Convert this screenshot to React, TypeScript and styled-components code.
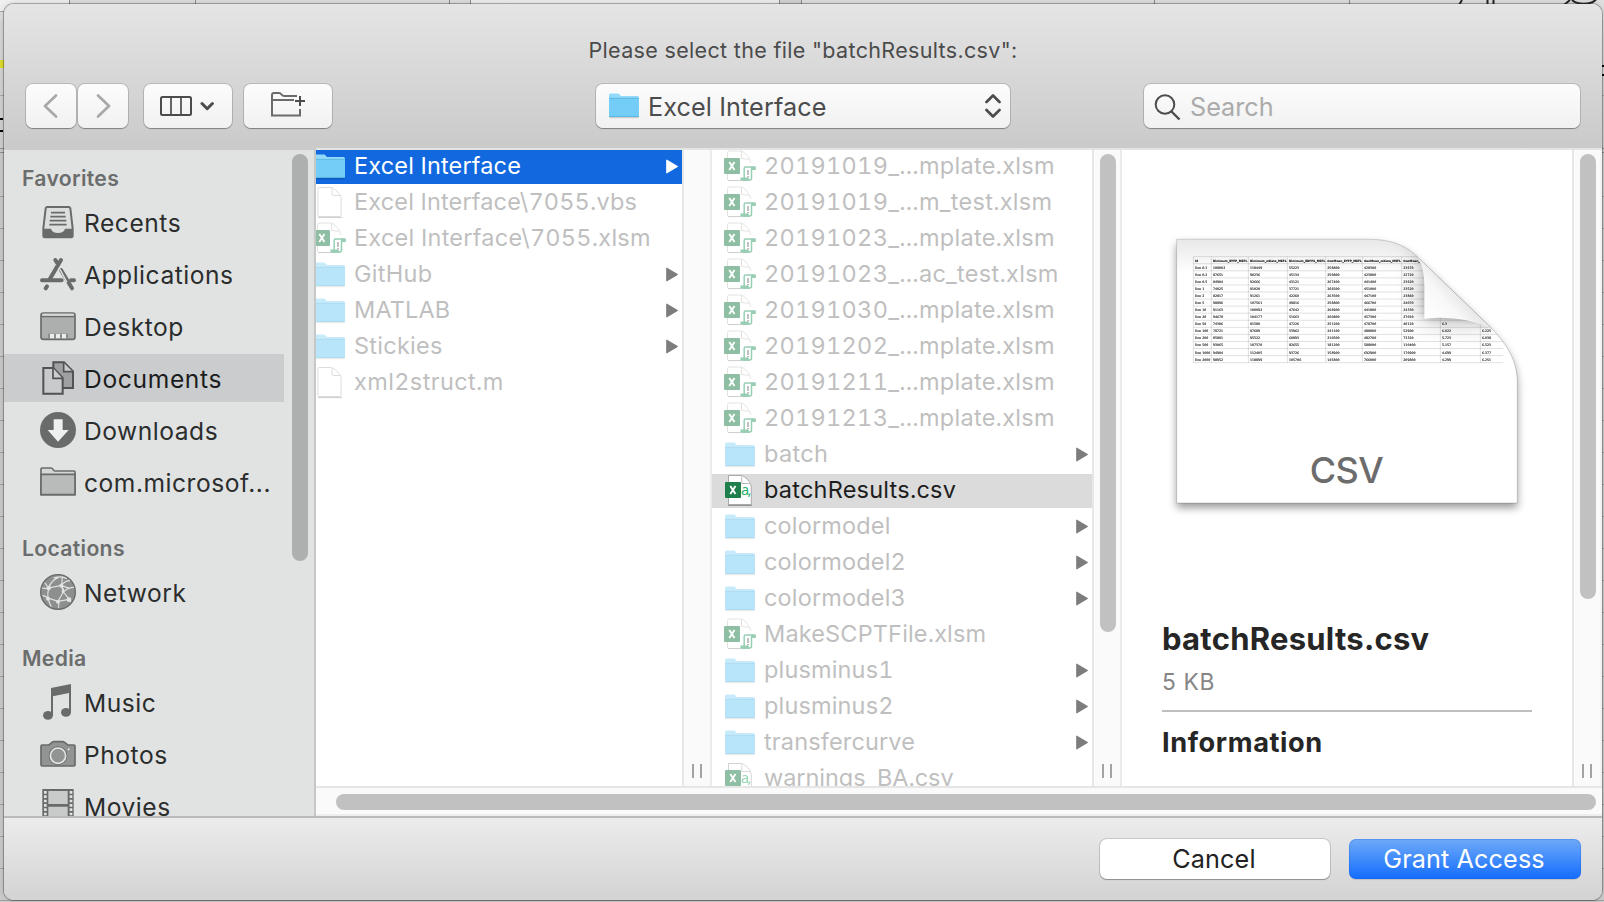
import React from "react";
import styled, { createGlobalStyle, css } from "styled-components";

const Global = createGlobalStyle`
  *, *::before, *::after { box-sizing: border-box; }
  html, body { margin: 0; padding: 0; overflow: hidden; }
  body { font-family: Inter, "Liberation Sans", sans-serif; }
`;

/* ---------- spreadsheet edge visible behind the sheet ---------- */

const Backdrop = styled.div`
  position: relative;
  width: 1604px;
  height: 902px;
  padding: 4px 2px 2px 4px;
  overflow: hidden;
  background:
    linear-gradient(#dede2c, #dede2c) 0 60px / 4px 8px no-repeat,
    linear-gradient(#000, #000) 0 118px / 3px 2px no-repeat,
    linear-gradient(#000, #000) 0 130px / 3px 2px no-repeat,
    linear-gradient(#000, #000) 1602px 65px / 2px 2px no-repeat,
    linear-gradient(#000, #000) 1602px 74px / 2px 2px no-repeat,
    linear-gradient(#a9a9a9, #a9a9a9) 0 11px / 4px 1px no-repeat,
    linear-gradient(#a9a9a9, #a9a9a9) 0 95px / 100% 1px no-repeat,
    linear-gradient(#8e8e8e, #8e8e8e) 0 148px / 100% 1px no-repeat,
    linear-gradient(#8e8e8e, #8e8e8e) 0 152px / 100% 1px no-repeat,
    linear-gradient(#8e8e8e, #8e8e8e) 69px 0 / 1px 4px no-repeat,
    linear-gradient(#8e8e8e, #8e8e8e) 195px 0 / 1px 4px no-repeat,
    linear-gradient(#8e8e8e, #8e8e8e) 449px 0 / 1px 4px no-repeat,
    linear-gradient(#8e8e8e, #8e8e8e) 470px 0 / 1px 4px no-repeat,
    linear-gradient(#8e8e8e, #8e8e8e) 779px 0 / 1px 4px no-repeat,
    linear-gradient(#8e8e8e, #8e8e8e) 801px 0 / 1px 4px no-repeat,
    linear-gradient(#8e8e8e, #8e8e8e) 1154px 0 / 1px 4px no-repeat,
    linear-gradient(#8e8e8e, #8e8e8e) 1349px 0 / 1px 4px no-repeat,
    linear-gradient(#f0f0f0, #f0f0f0) 0 0 / 69px 12px no-repeat,
    linear-gradient(#efefef, #efefef) 471px 0 / 308px 4px no-repeat,
    linear-gradient(#d3d3d3, #d3d3d3) 780px 0 / 21px 4px no-repeat,
    linear-gradient(#dfdfdf, #dfdfdf) 0 0 / 100% 20px no-repeat,
    linear-gradient(#dadada, #cfcfcf) 0 0 / 100% 148px no-repeat,
    repeating-linear-gradient(#a2a2a2 0 1px, #cbcbcb 1px 32px) 0 196px / 100% 720px no-repeat,
    #cbcbcb;
`;

const EdgeMarks = styled.svg`
  position: absolute;
  left: 1450px;
  top: 0;
`;

const Sheet = styled.main`
  display: flex;
  flex-direction: column;
  width: 1598px;
  height: 896px;
  border-radius: 10px;
  overflow: hidden;
  background: #e1e3e3;
`;

const SheetShadow = styled.div`
  border-radius: 10px;
  box-shadow: 0 0 0 1px rgba(0, 0, 0, 0.26), 0 0 6px rgba(0, 0, 0, 0.2);
`;

/* ---------- header ---------- */

const Header = styled.header`
  flex: none;
  height: 144px;
  background: linear-gradient(#e5e5e5, #cacaca);
  display: flex;
  flex-direction: column;
`;

const Prompt = styled.h1`
  margin: 0;
  height: 80px;
  padding-top: 12px;
  line-height: 68px;
  text-align: center;
  font-size: 21.5px;
  font-weight: 400;
  letter-spacing: 0.33px;
  color: #4b4b4b;
`;

const Toolbar = styled.div`
  display: flex;
  height: 44px;
  padding: 0 22px;
`;

const control = css`
  height: 44px;
  border-radius: 7px;
  background: linear-gradient(#fcfcfc, #f1f1f1);
  box-shadow: 0 0 0 1px rgba(0, 0, 0, 0.13), 0 1px 1px rgba(0, 0, 0, 0.28);
  display: flex;
  align-items: center;
`;

const ToolButton = styled.button<{ $w: number; $gap: number }>`
  ${control}
  justify-content: center;
  flex: none;
  width: ${(p) => p.$w}px;
  margin-right: ${(p) => p.$gap}px;
  border: 0;
  padding: 0 2px 0 0;
`;

const Popup = styled.div`
  ${control}
  flex: none;
  width: 414px;
  padding: 0 9px 0 12px;
  font-size: 25.2px;
  color: #4c4c4c;
  letter-spacing: 0.1px;
`;

const PopupLabel = styled.span`
  flex: 1;
  padding: 1px 0 0 8px;
`;

const SearchBox = styled.div`
  ${control}
  flex: none;
  width: 436px;
  margin-left: auto;
  padding-left: 10px;
  gap: 8px;
  font-size: 25.2px;
  color: #ababab;
`;

const SearchLabel = styled.span`
  padding-top: 1px;
`;

/* ---------- body ---------- */

const Body = styled.div`
  flex: none;
  display: flex;
  height: 668px;
`;

const Sidebar = styled.nav`
  flex: none;
  width: 312px;
  display: flex;
  border-top: 2px solid #cbcbcb;
  border-right: 2px solid #c6c7c7;
  background: #e1e3e3;
  overflow: hidden;
`;

const SidebarList = styled.div`
  width: 280px;
  height: 666px;
  overflow: hidden;
`;

const SideHeading = styled.h2<{ $first?: boolean }>`
  margin: 0;
  padding: ${(p) => (p.$first ? 10 : 22)}px 0 0 18px;
  line-height: 36px;
  font-size: 21.2px;
  font-weight: 600;
  letter-spacing: 0.3px;
  color: #6b6d6d;
`;

const SideItem = styled.div`
  height: 52px;
  padding: 2px 0;
`;

const SideItemInner = styled.div<{ $selected?: boolean }>`
  height: 48px;
  padding-left: 36px;
  display: flex;
  align-items: center;
  gap: 8px;
  font-size: 24.6px;
  letter-spacing: ${(p) => (p.$selected ? 0.65 : 0.52)}px;
  white-space: nowrap;
  color: ${(p) => (p.$selected ? "#1b1c1d" : "#2b2d2d")};
  background: ${(p) => (p.$selected ? "#cbcccd" : "transparent")};

  svg { flex: none; }
  span { padding-top: 2px; }
`;

const Thumb = styled.div<{ $h: number; $dark?: boolean }>`
  width: 16px;
  height: ${(p) => p.$h}px;
  margin: 4px 0 0 6px;
  border-radius: 8px;
  background: ${(p) => (p.$dark ? "#aeafaf" : "#c1c1c1")};
`;

const SideThumb = styled(Thumb)`
  margin-left: 8px;
`;

const Browser = styled.section`
  width: 1286px;
  display: flex;
  flex-direction: column;
  border-top: 2px solid #e4e4e4;
  background: #fff;
`;

const Columns = styled.div`
  display: flex;
  height: 636px;
`;

const Column = styled.div<{ $w: number }>`
  flex: none;
  width: ${(p) => p.$w}px;
  overflow: hidden;
  background: #fff;
`;

const Gutter = styled.div<{ $last?: boolean }>`
  flex: none;
  width: 30px;
  border-left: 2px solid #e7e7e7;
  border-right: 2px solid ${(p) => (p.$last ? "#f3f3f3" : "#ebebeb")};
  background: #fafafa;
  display: flex;
  flex-direction: column;
`;

const Grip = styled.div`
  margin: auto 0 8px 8px;
  width: 10px;
  height: 14px;
  border-left: 2px solid #a3a3a3;
  border-right: 2px solid #a3a3a3;
`;

const Row = styled.div<{ $state?: "active" | "chosen"; $shift: number }>`
  height: 34px;
  margin-bottom: 2px;
  display: flex;
  align-items: center;
  padding-right: 4px;
  white-space: nowrap;
  font-size: 23.5px;
  font-variant-numeric: tabular-nums;
  color: ${(p) => (p.$state === "active" ? "#fff" : p.$state === "chosen" ? "#1d1d1d" : "#bfbfbf")};
  background: ${(p) => (p.$state === "active" ? "#1168df" : p.$state === "chosen" ? "#dbdbdb" : "#fff")};

  > svg:first-child { flex: none; margin-left: ${(p) => p.$shift}px; }
  > svg:last-child { flex: none; }
`;

const RowLabel = styled.span<{ $ls: number }>`
  flex: 1;
  padding: 0 0 3px 8px;
  letter-spacing: ${(p) => p.$ls}px;
`;

const HScroll = styled.div`
  height: 30px;
  border-top: 2px solid #e6e6e6;
  border-bottom: 2px solid #eeeeee;
  background: #fafafa;
  padding: 6px 6px 0 20px;
`;

const HThumb = styled.div`
  height: 16px;
  border-radius: 8px;
  background: #c1c1c1;
`;

/* ---------- preview ---------- */

const Preview = styled.article`
  flex: none;
  width: 450px;
  padding: 70px 32px 0 38px;
  overflow: hidden;
  background: #fff;
  color: #262626;
`;

const PreviewArt = styled.div`
  height: 380px;
  svg { display: block; }
`;

const FileName = styled.h2`
  margin: 15px 0 0 2px;
  line-height: 48px;
  height: 48px;
  font-size: 31px;
  font-weight: 700;
  letter-spacing: 0.25px;
  white-space: nowrap;
`;

const FileSize = styled.p`
  margin: 4px 0 0 2px;
  line-height: 30px;
  font-size: 22.8px;
  letter-spacing: 0.6px;
  color: #868686;
`;

const Rule = styled.hr`
  margin: 13px 8px 0 2px;
  border: 0;
  height: 2px;
  background: #bfbfbf;
`;

const InfoTitle = styled.h3`
  margin: 14px 0 0 2px;
  line-height: 34px;
  font-size: 27.2px;
  font-weight: 700;
  letter-spacing: 0.6px;
`;

/* ---------- footer ---------- */

const Footer = styled.footer`
  height: 84px;
  border-top: 2px solid #bababa;
  background: linear-gradient(#ececec, #d3d3d3);
  display: flex;
  justify-content: flex-end;
  gap: 19px;
  padding: 21px 21px 0 0;
`;

const Button = styled.button<{ $primary?: boolean }>`
  height: 40px;
  width: ${(p) => (p.$primary ? 232 : 230)}px;
  border: 0;
  border-radius: 7px;
  padding: 0 2px 0 0;
  font-family: inherit;
  font-size: 25.2px;
  letter-spacing: 0.12px;
  color: ${(p) => (p.$primary ? "#fff" : "#222")};
  background: ${(p) => (p.$primary ? "linear-gradient(#6fa9f9, #4a92fa 40%, #146cff)" : "#fff")};
  box-shadow: ${(p) =>
    p.$primary
      ? "inset 0 0 0 1px rgba(20, 90, 220, 0.25), 0 1px 1px rgba(0, 0, 0, 0.12)"
      : "0 0 0 1px rgba(0, 0, 0, 0.13), 0 1px 1px rgba(0, 0, 0, 0.25)"};
`;

/* ---------- file icons ---------- */

const Folder = ({ dim }: { dim?: boolean }) => (
  <svg width="32" height="34" viewBox="0 0 32 34" opacity={dim ? 0.5 : 1}>
    <path d="M1.5 28.6h29" stroke="#000" strokeOpacity=".16" strokeWidth="1.4" />
    <path d="M1 6a1.6 1.6 0 0 1 1.6-1.6h7.4c1.6 0 1.8 2.7 4 2.7h15.4A1.6 1.6 0 0 1 31 8.7V26H1z" fill="#93d9fa" />
    <path d="M1 9.3h30v17.5a1.3 1.3 0 0 1-1.3 1.3H2.3A1.3 1.3 0 0 1 1 26.8z" fill="#74cdf6" />
    <path d="M1 9.3h30M1 27.4h30" stroke="#4fb0dd" strokeWidth="1" opacity=".7" />
  </svg>
);

const PlainDoc = () => (
  <svg width="32" height="34" viewBox="0 0 32 34">
    <path d="M4 31.5h24" stroke="#000" strokeOpacity=".18" strokeWidth="1.2" />
    <path d="M5 1.5h12.5c2 0 9.5 7 9.5 10V29.5a1 1 0 0 1-1 1H5a1 1 0 0 1-1-1V2.5a1 1 0 0 1 1-1z" fill="#fff" stroke="#dcdcdc" />
    <path d="M18 2v6a1.5 1.5 0 0 0 1.5 1.5H26" fill="none" stroke="#dcdcdc" />
  </svg>
);

const ExcelMark = ({ x }: { x: number }) => (
  <>
    <rect x={x} y="8" width="16" height="16" rx="1" fill="#1f7f4c" />
    <path d={`M${x + 5.3} 12l5.2 8m0-8l-5.2 8`} stroke="#fff" strokeWidth="1.9" />
  </>
);

const XlsmDoc = () => (
  <svg width="32" height="34" viewBox="0 0 32 34">
    <g opacity=".5">
      <path d="M4 30.6h17" stroke="#000" strokeOpacity=".4" />
      <path d="M3.5 30V2.5a1.5 1.5 0 0 1 1.5-1.5h12.5c4.500 2 8.500 7 9.300 12" fill="none" stroke="#c8c8c8" />
      <path d="M17.5 1v7.5l7.5.8" fill="none" stroke="#c8c8c8" />
      <ExcelMark x={0} />
      <path d="M20.2 29V18.2q0-1.300 1.300-1.300h7q-1 .5-1 2V28q0 2-1.800 2h-5.500z" fill="#fff" stroke="#2fa06c" strokeWidth="1.5" />
      <path d="M28 16.200h3q.8 0 .8 1V20h-3.800z" fill="#2f9d69" />
      <path d="M16.200 27.500h8.300q0 2.600 2 3.300h-8.500q-1.800-.4-1.800-3.300z" fill="#2f9d69" />
      <path d="M24 20v5M24 26v1.600" stroke="#777" strokeWidth="1.8" />
    </g>
  </svg>
);

const CommaText = styled.text`
  font: 400 14.5px "Noto Sans", sans-serif;
  fill: #27b16b;
`;

const CsvDoc = ({ dim }: { dim?: boolean }) => (
  <svg width="32" height="34" viewBox="0 0 32 34" opacity={dim ? 0.5 : 1}>
    <path d="M4 31.3h24" stroke="#000" strokeOpacity=".4" strokeWidth="1" />
    <path d="M4.5 1.5h13c4 1 8.5 6 9.8 11v18H4.5z" fill="#fff" stroke="#a9a9a9" strokeWidth="1" />
    <path d="M17.8 1.5v8h8.500" fill="#fff" stroke="#b9b9b9" strokeWidth="1" />
    <ExcelMark x={1} />
    <CommaText x="17" y="21" textLength="10.5">a,</CommaText>
  </svg>
);

const Arrow = ({ active }: { active?: boolean }) => (
  <svg width="12" height="34" viewBox="0 0 12 34">
    <path d="M.8 10.2v12.600L11.300 16.500z" fill={active ? "#fff" : "#7d7d7d"} stroke={active ? "#fff" : "#7d7d7d"} strokeWidth="1.2" strokeLinejoin="round" />
  </svg>
);

/* ---------- sidebar icons ---------- */

const G = "#696b6a";

const SideIcon = ({ children }: { children: React.ReactNode }) => (
  <svg width="36" height="36" viewBox="0 0 108 108" fill="none">
    {children}
  </svg>
);

const icons: Record<string, React.ReactNode> = {
  recents: (
    <SideIcon>
      <path d="M22 9h64q4 0 5 4l7 60v23q0 4-4 4H14q-4 0-4-4V73l7-60q1-4 5-4z" fill="#dcdede" stroke={G} strokeWidth="6" />
      <path d="M10 74h23q4 13 21 13t21-13h23v23q0 3-3 3H13q-3 0-3-3z" fill={G} />
      <path d="M33 26h42M31 38h46M29 50h50M28 62h52" stroke={G} strokeWidth="5" />
    </SideIcon>
  ),
  apps: (
    <SideIcon>
      <g stroke={G} strokeWidth="12" strokeLinecap="round">
        <path d="M63 12L29 70M46 12l5 8M6 73h59M93 73h9M21 91l-4 6" />
        <path d="M63 42l33 55" />
      </g>
      <path d="M57 35l24 44" stroke="#e1e3e3" strokeWidth="4" />
    </SideIcon>
  ),
  desktop: (
    <SideIcon>
      <rect x="3" y="15" width="102" height="79" rx="7" fill="#adafae" stroke={G} strokeWidth="5" />
      <path d="M7 20h94" stroke="#d9dbda" strokeWidth="6" />
      <path d="M5 26h98" stroke={G} strokeWidth="4" />
      <path d="M24 77h60v14H24z" fill="#8b8d8c" />
      <path d="M30 78h12v13H30zM48 78h12v13H48zM66 78h12v13H66z" fill="#ebeceb" />
    </SideIcon>
  ),
  documents: (
    <SideIcon>
      <path d="M40 7h32l27 27v50H40z" fill="#9fa0a2" stroke="#505253" strokeWidth="6" />
      <path d="M71 8v27h27" fill="#cbcccd" stroke="#505253" strokeWidth="5" />
      <path d="M10 24h30l28 30v47H10z" fill="#c9cacb" stroke="#505253" strokeWidth="6" />
      <path d="M39 24v31h28" fill="#cbcccd" stroke="#505253" strokeWidth="5" />
    </SideIcon>
  ),
  downloads: (
    <SideIcon>
      <circle cx="54" cy="54" r="54" fill={G} />
      <path d="M41 22h27v32h18L54 89 23 54h18z" fill="#eef0ef" />
    </SideIcon>
  ),
  folder: (
    <SideIcon>
      <path d="M3 92V15q0-3 3-3h27q5 0 8 7 1 2 4 2h57q3 0 3 3v68z" fill="#d5d7d6" stroke={G} strokeWidth="5" strokeLinejoin="round" />
      <path d="M3 31h102v61H3z" fill="#b9bbba" stroke={G} strokeWidth="5" strokeLinejoin="round" />
    </SideIcon>
  ),
  network: (
    <SideIcon>
      <circle cx="54" cy="54" r="52" fill="#8d8f8e" stroke={G} strokeWidth="4" />
      <g stroke="#e1e3e3" strokeWidth="3.5">
        <path d="M6 42Q20 45 26 42L64 34 90 44M26 42Q34 16 62 8M64 34Q68 20 66 8M64 34Q76 20 90 20M26 42Q22 60 24 72L54 82 88 76M64 34L70 54 54 82M64 34Q72 44 70 54M70 54L88 76M24 72Q16 66 8 64M24 72Q28 88 34 98M54 82Q58 92 56 102M88 76L92 84M26 42L14 26M70 54Q84 40 102 40M40 12Q66 4 80 14" />
      </g>
      <g fill="#e1e3e3">
        <circle cx="26" cy="42" r="7" /><circle cx="64" cy="35" r="6" /><circle cx="24" cy="74" r="6" />
        <circle cx="54" cy="83" r="6" /><circle cx="87" cy="77" r="7" /><circle cx="69" cy="53" r="4" />
      </g>
    </SideIcon>
  ),
  music: (
    <SideIcon>
      <path d="M33 12L93 0v86h-6V27L39 37v58h-6z" fill={G} />
      <ellipse cx="24" cy="94" rx="15" ry="13" fill={G} />
      <ellipse cx="78" cy="85" rx="15" ry="13" fill={G} />
    </SideIcon>
  ),
  photos: (
    <SideIcon>
      <path d="M6 27h21l8-7q4-3 8-3h24q4 0 8 3l8 7h19q3 0 3 3v57q0 3-3 3H6q-3 0-3-3V30q0-3 3-3z" fill="#929493" stroke={G} strokeWidth="5" />
      <circle cx="54" cy="59" r="28" fill={G} />
      <circle cx="54" cy="59" r="23" fill="#929493" stroke="#e4e6e5" strokeWidth="5" />
      <circle cx="86" cy="40" r="3" fill="#e4e6e5" />
    </SideIcon>
  ),
  movies: (
    <SideIcon>
      <path d="M7 3h94v102H7z" fill={G} />
      <path d="M25 9h58v39H25zM25 56h58v44H25z" fill="#c9cbca" />
      <path d="M16 9v96M93 9v96" stroke="#e1e3e3" strokeWidth="8" strokeDasharray="8 5" />
    </SideIcon>
  ),
};

const sections: { title: string; items: [icon: string, label: string][] }[] = [
  {
    title: "Favorites",
    items: [
      ["recents", "Recents"],
      ["apps", "Applications"],
      ["desktop", "Desktop"],
      ["documents", "Documents"],
      ["downloads", "Downloads"],
      ["folder", "com.microsof..."],
    ],
  },
  { title: "Locations", items: [["network", "Network"]] },
  { title: "Media", items: [["music", "Music"], ["photos", "Photos"], ["movies", "Movies"]] },
];

/* ---------- browser data ---------- */

type Kind = "folder" | "doc" | "xlsm" | "csv";
type Entry = { kind: Kind; name: string; state?: "active" | "chosen"; ls?: number };

const parentFiles: Entry[] = [
  { kind: "folder", name: "Excel Interface", state: "active" },
  { kind: "doc", name: "Excel Interface\\7055.vbs" },
  { kind: "xlsm", name: "Excel Interface\\7055.xlsm", ls: 0.24 },
  { kind: "folder", name: "GitHub", ls: 0.3 },
  { kind: "folder", name: "MATLAB" },
  { kind: "folder", name: "Stickies", ls: 0.25 },
  { kind: "doc", name: "xml2struct.m", ls: 0.38 },
];

const childFiles: Entry[] = [
  { kind: "xlsm", name: "20191019_...mplate.xlsm", ls: 0.28 },
  { kind: "xlsm", name: "20191019_...m_test.xlsm", ls: 0.28 },
  { kind: "xlsm", name: "20191023_...mplate.xlsm", ls: 0.28 },
  { kind: "xlsm", name: "20191023_...ac_test.xlsm", ls: 0.28 },
  { kind: "xlsm", name: "20191030_...mplate.xlsm", ls: 0.28 },
  { kind: "xlsm", name: "20191202_...mplate.xlsm", ls: 0.28 },
  { kind: "xlsm", name: "20191211_...mplate.xlsm", ls: 0.28 },
  { kind: "xlsm", name: "20191213_...mplate.xlsm", ls: 0.28 },
  { kind: "folder", name: "batch", ls: 0.3 },
  { kind: "csv", name: "batchResults.csv", state: "chosen", ls: 0.22 },
  { kind: "folder", name: "colormodel" },
  { kind: "folder", name: "colormodel2" },
  { kind: "folder", name: "colormodel3" },
  { kind: "xlsm", name: "MakeSCPTFile.xlsm" },
  { kind: "folder", name: "plusminus1" },
  { kind: "folder", name: "plusminus2" },
  { kind: "folder", name: "transfercurve" },
  { kind: "csv", name: "warnings_BA.csv", ls: -0.05 },
];

const FileList = ({ files, shift }: { files: Entry[]; shift: number }) => (
  <>
    {files.map((f) => (
      <Row key={f.name} $state={f.state} $shift={shift}>
        {f.kind === "folder" && <Folder dim={!f.state} />}
        {f.kind === "doc" && <PlainDoc />}
        {f.kind === "xlsm" && <XlsmDoc />}
        {f.kind === "csv" && <CsvDoc dim={!f.state} />}
        <RowLabel $ls={f.ls ?? 0.15}>{f.name}</RowLabel>
        {f.kind === "folder" && <Arrow active={f.state === "active"} />}
      </Row>
    ))}
  </>
);

/* ---------- document thumbnail ---------- */

const colX = [100, 154, 265, 382, 497, 607, 725, 841, 961];
const table: string[][] = [
  ["Id", "BinCount_EYFP_MEFL", "BinCount_mKate_MEFL", "BinCount_EBFP2_MEFL", "GeoMean_EYFP_MEFL", "GeoMean_mKate_MEFL", "GeoMean_"],
  ["Dox 0.1", "108002", "118449", "55223", "258800", "428300", "23670"],
  ["Dox 0.2", "87651", "90236", "45134", "250800", "423800", "22720"],
  ["Dox 0.5", "84904", "92666", "43121", "267400", "441400", "23620"],
  ["Dox 1", "74025", "81020", "37721", "266500", "451000", "23520"],
  ["Dox 2", "82817", "91261", "42260", "263500", "447100", "23860"],
  ["Dox 5", "98896", "107561", "49816", "258800", "466700", "24070"],
  ["Dox 10", "91163", "100092", "47642", "266900", "441800", "24330"],
  ["Dox 20", "94678", "104177", "51663", "260800", "457300", "27010"],
  ["Dox 50", "74306", "81580", "47226", "251200", "478700", "40120", "6.3"],
  ["Dox 100", "78721", "87689", "53962", "241100", "488800", "52900", "6.022", "6.225"],
  ["Dox 200", "85801", "95522", "60893", "210500", "482700", "73320", "5.723", "6.038"],
  ["Dox 500", "93065", "107370", "82655", "181200", "588000", "110400", "5.157", "6.523"],
  ["Dox 1000", "94904", "112405", "93726", "158900", "692900", "170900", "4.699", "6.377"],
  ["Dox 2000", "98952", "118899", "105706", "145800", "766000", "209800", "4.299", "6.251"],
];

const Cell = styled.text<{ $head: boolean }>`
  font-family: "DejaVu Sans", sans-serif;
  font-size: ${(p) => (p.$head ? 8.6 : 9.6)}px;
  font-weight: ${(p) => (p.$head ? 700 : 400)};
  fill: #000;
  stroke: #000;
  stroke-width: 0.35;
`;

const TypeLabel = styled.text`
  font-family: Inter, sans-serif;
  font-size: 108px;
  font-weight: 500;
  fill: #6c6c6c;
`;

const rowH = 21.2;
const pagePath = "M50 58H630C700 58 745 82 775 113L985 315C1050 380 1072 430 1072 490V849H50z";
const curlPath = "M690 66C760 90 792 130 793 200V296C860 288 940 298 998 328C930 265 840 180 775 113C755 95 730 75 690 66z";

const Thumbnail = () => (
  <svg width="380" height="300" viewBox="0 0 1140 900">
    <defs>
      <clipPath id="page"><path d={pagePath} /></clipPath>
      <filter id="soft" x="-20%" y="-20%" width="140%" height="140%"><feGaussianBlur stdDeviation="12" /></filter>
      <filter id="softer" x="-40%" y="-40%" width="180%" height="180%"><feGaussianBlur stdDeviation="38" /></filter>
      <linearGradient id="topShade" x1="0" y1="0" x2="0" y2="1">
        <stop offset="0" stopColor="#e8e8e8" /><stop offset="1" stopColor="#fff" />
      </linearGradient>
      <linearGradient id="curlFill" gradientUnits="userSpaceOnUse" x1="800" y1="290" x2="890" y2="210">
        <stop offset="0" stopColor="#fff" /><stop offset=".6" stopColor="#f8f8f8" /><stop offset="1" stopColor="#e6e6e6" />
      </linearGradient>
    </defs>
    <path d={pagePath} fill="#000" opacity=".4" filter="url(#soft)" transform="translate(0 14)" />
    <path d={pagePath} fill="#fff" />
    <g clipPath="url(#page)">
      <rect x="50" y="58" width="1022" height="100" fill="url(#topShade)" />
      <path d={curlPath} fill="#000" opacity=".36" filter="url(#softer)" />
      <g stroke="#000" strokeOpacity=".12" strokeWidth="3">
        {table.map((_, i) => <path key={i} d={`M100 ${110 + i * rowH}H1030`} />)}
        <path d="M100 428H1030" />
        {colX.map((x) => <path key={x} d={`M${x} 110V428`} />)}
      </g>
      <g opacity=".92">
        {table.map((row, r) =>
          row.map((cell, c) => (
            <Cell key={`${r}-${c}`} $head={r === 0} x={colX[c] + 5} y={125 + r * rowH}>
              {cell}
            </Cell>
          ))
        )}
      </g>
      <path d={curlPath} fill="#000" opacity=".3" filter="url(#soft)" transform="translate(4 -4)" />
    </g>
    <path d="M775 113C790 145 793 170 793 200V296C860 288 940 298 998 328z" fill="url(#curlFill)" />
    <path d={pagePath} fill="none" stroke="#000" strokeOpacity=".17" strokeWidth="3" />
    <TypeLabel x="449" y="788" textLength="222">CSV</TypeLabel>
  </svg>
);

/* ---------- page ---------- */

export default function App() {
  return (
    <>
      <Global />
      <Backdrop>
        <EdgeMarks width="154" height="4" viewBox="0 0 154 4">
          <path d="M12 0L9 5M37.5 0v5M43.5 0v5" stroke="#222" strokeWidth="2" />
          <path d="M114 5l6-5M122 0c5 5 19 5 24-.5" stroke="#222" strokeWidth="2" fill="none" />
        </EdgeMarks>
        <SheetShadow>
          <Sheet>
            <Header>
              <Prompt>Please select the file "batchResults.csv":</Prompt>
              <Toolbar>
                <ToolButton $w={50} $gap={2} aria-label="Back">
                  <svg width="20" height="28" viewBox="0 0 20 28"><path d="M16 3.5L5 14l11 10.5" fill="none" stroke="#a8a8a8" strokeWidth="2.7" strokeLinecap="round" strokeLinejoin="round" /></svg>
                </ToolButton>
                <ToolButton $w={50} $gap={16} aria-label="Forward">
                  <svg width="20" height="28" viewBox="0 0 20 28"><path d="M6 3.5L17 14 6 24.5" fill="none" stroke="#a8a8a8" strokeWidth="2.7" strokeLinecap="round" strokeLinejoin="round" /></svg>
                </ToolButton>
                <ToolButton $w={88} $gap={12} aria-label="View">
                  <svg width="54" height="20" viewBox="0 0 54 20" fill="none">
                    <rect x="1" y="1" width="30" height="18" rx="1.5" stroke="#4c4c4c" strokeWidth="2" />
                    <path d="M11 1v18M21 1v18" stroke="#4c4c4c" strokeWidth="1.7" />
                    <path d="M42 7.5l5.2 5.2 5.2-5.2" stroke="#4c4c4c" strokeWidth="3" strokeLinecap="round" strokeLinejoin="round" />
                  </svg>
                </ToolButton>
                <ToolButton $w={88} $gap={264} aria-label="New Folder">
                  <svg width="38" height="28" viewBox="0 0 38 28" fill="none" stroke="#6b6b6b" strokeWidth="2">
                    <path d="M29 4H16.500q-2 0-3-1.500T11 1H6Q4 1 4 3v20.500h28V17M5 8h21" />
                    <path d="M32 4v10M27 9h10" stroke="#4c4c4c" />
                  </svg>
                </ToolButton>
                <Popup>
                  <Folder />
                  <PopupLabel>Excel Interface</PopupLabel>
                  <svg width="16" height="28" viewBox="0 0 16 28" fill="none" stroke="#4c4c4c" strokeWidth="2.7" strokeLinecap="round" strokeLinejoin="round">
                    <path d="M1.5 10L8 3.500l6.500 6.500M1.500 18L8 24.500l6.500-6.500" />
                  </svg>
                </Popup>
                <SearchBox>
                  <svg width="28" height="30" viewBox="0 0 28 30" fill="none" stroke="#4c4c4c" strokeWidth="2">
                    <circle cx="11" cy="13.5" r="9.3" />
                    <path d="M17.500 20.500l8 8" strokeWidth="2.4" />
                  </svg>
                  <SearchLabel>Search</SearchLabel>
                </SearchBox>
              </Toolbar>
            </Header>
            <Body>
              <Sidebar>
                <SidebarList>
                  {sections.map((s, i) => (
                    <React.Fragment key={s.title}>
                      <SideHeading $first={i === 0}>{s.title}</SideHeading>
                      {s.items.map(([icon, label]) => (
                        <SideItem key={label}>
                          <SideItemInner $selected={label === "Documents"}>
                            {icons[icon]}
                            <span>{label}</span>
                          </SideItemInner>
                        </SideItem>
                      ))}
                    </React.Fragment>
                  ))}
                </SidebarList>
                <SideThumb $h={407} $dark />
              </Sidebar>
              <Browser>
                <Columns>
                  <Column $w={366}><FileList files={parentFiles} shift={-2} /></Column>
                  <Gutter><Grip /></Gutter>
                  <Column $w={380}><FileList files={childFiles} shift={12} /></Column>
                  <Gutter><Thumb $h={478} /><Grip /></Gutter>
                  <Preview>
                    <PreviewArt><Thumbnail /></PreviewArt>
                    <FileName>batchResults.csv</FileName>
                    <FileSize>5 KB</FileSize>
                    <Rule />
                    <InfoTitle>Information</InfoTitle>
                  </Preview>
                  <Gutter $last><Thumb $h={445} /><Grip /></Gutter>
                </Columns>
                <HScroll><HThumb /></HScroll>
              </Browser>
            </Body>
            <Footer>
              <Button>Cancel</Button>
              <Button $primary>Grant Access</Button>
            </Footer>
          </Sheet>
        </SheetShadow>
      </Backdrop>
    </>
  );
}
